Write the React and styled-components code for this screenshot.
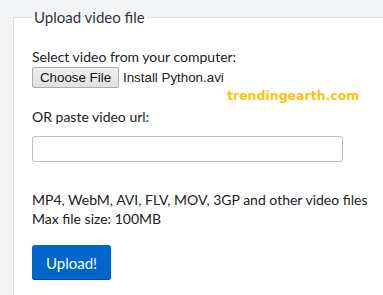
import React from "react";
import styled, { createGlobalStyle } from "styled-components";

const GlobalStyle = createGlobalStyle`
  body {
    margin: 0;
    background: #f3f4f6;
    overflow: hidden;
    font-family: Lato, "Noto Sans", sans-serif;
  }
`;

const Page = styled.div`
  position: relative;
  width: 383px;
  height: 295px;
  overflow: hidden;
  padding: 8px 0 0 13px;
  box-sizing: border-box;
  display: flex;
`;

const Fieldset = styled.fieldset`
  margin: 0;
  flex: 1;
  min-width: 0;
  box-sizing: border-box;
  border: 1px solid #dcdde0;
  border-right: none;
  border-bottom: none;
  background: #fff;
  padding: 14px 0 0 18px;
`;

const Legend = styled.legend`
  padding: 0 2px;
  font-size: 15px;
  color: #303440;
`;

const Label = styled.div`
  font-size: 14px;
  color: #222;
  line-height: 18px;
  margin-top: ${(p) => p.$gap}px;
`;

const FileRow = styled.div`
  display: flex;
  align-items: center;
  gap: 4px;
  margin-top: 1px;
`;

const FileButton = styled.span`
  display: inline-flex;
  align-items: center;
  justify-content: center;
  width: 87px;
  height: 21px;
  box-sizing: border-box;
  border: 1px solid #adadad;
  border-radius: 2px;
  background: linear-gradient(#f0f0f0, #e1e1e1);
  font-family: "Liberation Sans", Arial, sans-serif;
  font-size: 13.33px;
  color: #111;
`;

const FileName = styled.span`
  font-family: "Liberation Sans", Arial, sans-serif;
  font-size: 13.33px;
  color: #222;
`;

const UrlInput = styled.input`
  display: block;
  width: 311px;
  height: 26px;
  box-sizing: border-box;
  margin-top: 10px;
  border: 1px solid #bfbfbf;
  border-radius: 3px;
  background: #fff;
`;

const Info = styled.div`
  margin-top: 28px;
  font-size: 14px;
  line-height: 19px;
  color: #222;
`;

const UploadButton = styled.button`
  display: block;
  margin-top: 17px;
  width: 79px;
  height: 35px;
  border: none;
  border-radius: 3px;
  background: #0066cc;
  box-shadow: inset 0 -1px 0 #00509f;
  color: #fff;
  font-family: Lato, "Noto Sans", sans-serif;
  font-size: 15px;
`;

const Watermark = styled.div`
  position: absolute;
  left: 227px;
  top: 88px;
  font-family: "DejaVu Sans", sans-serif;
  font-weight: bold;
  font-size: 12.5px;
  letter-spacing: 0;
  color: #ffc20e;
`;

export default function App() {
  return (
    <Page>
      <GlobalStyle />
      <Fieldset>
        <Legend>Upload video file</Legend>
        <Label $gap={8}>Select video from your computer:</Label>
        <FileRow>
          <FileButton>Choose File</FileButton>
          <FileName>Install Python.avi</FileName>
        </FileRow>
        <Label $gap={20}>OR paste video url:</Label>
        <UrlInput type="text" />
        <Info>
          MP4, WebM, AVI, FLV, MOV, 3GP and other video files
          <br />
          Max file size: 100MB
        </Info>
        <UploadButton>Upload!</UploadButton>
      </Fieldset>
      <Watermark>trendingearth.com</Watermark>
    </Page>
  );
}
